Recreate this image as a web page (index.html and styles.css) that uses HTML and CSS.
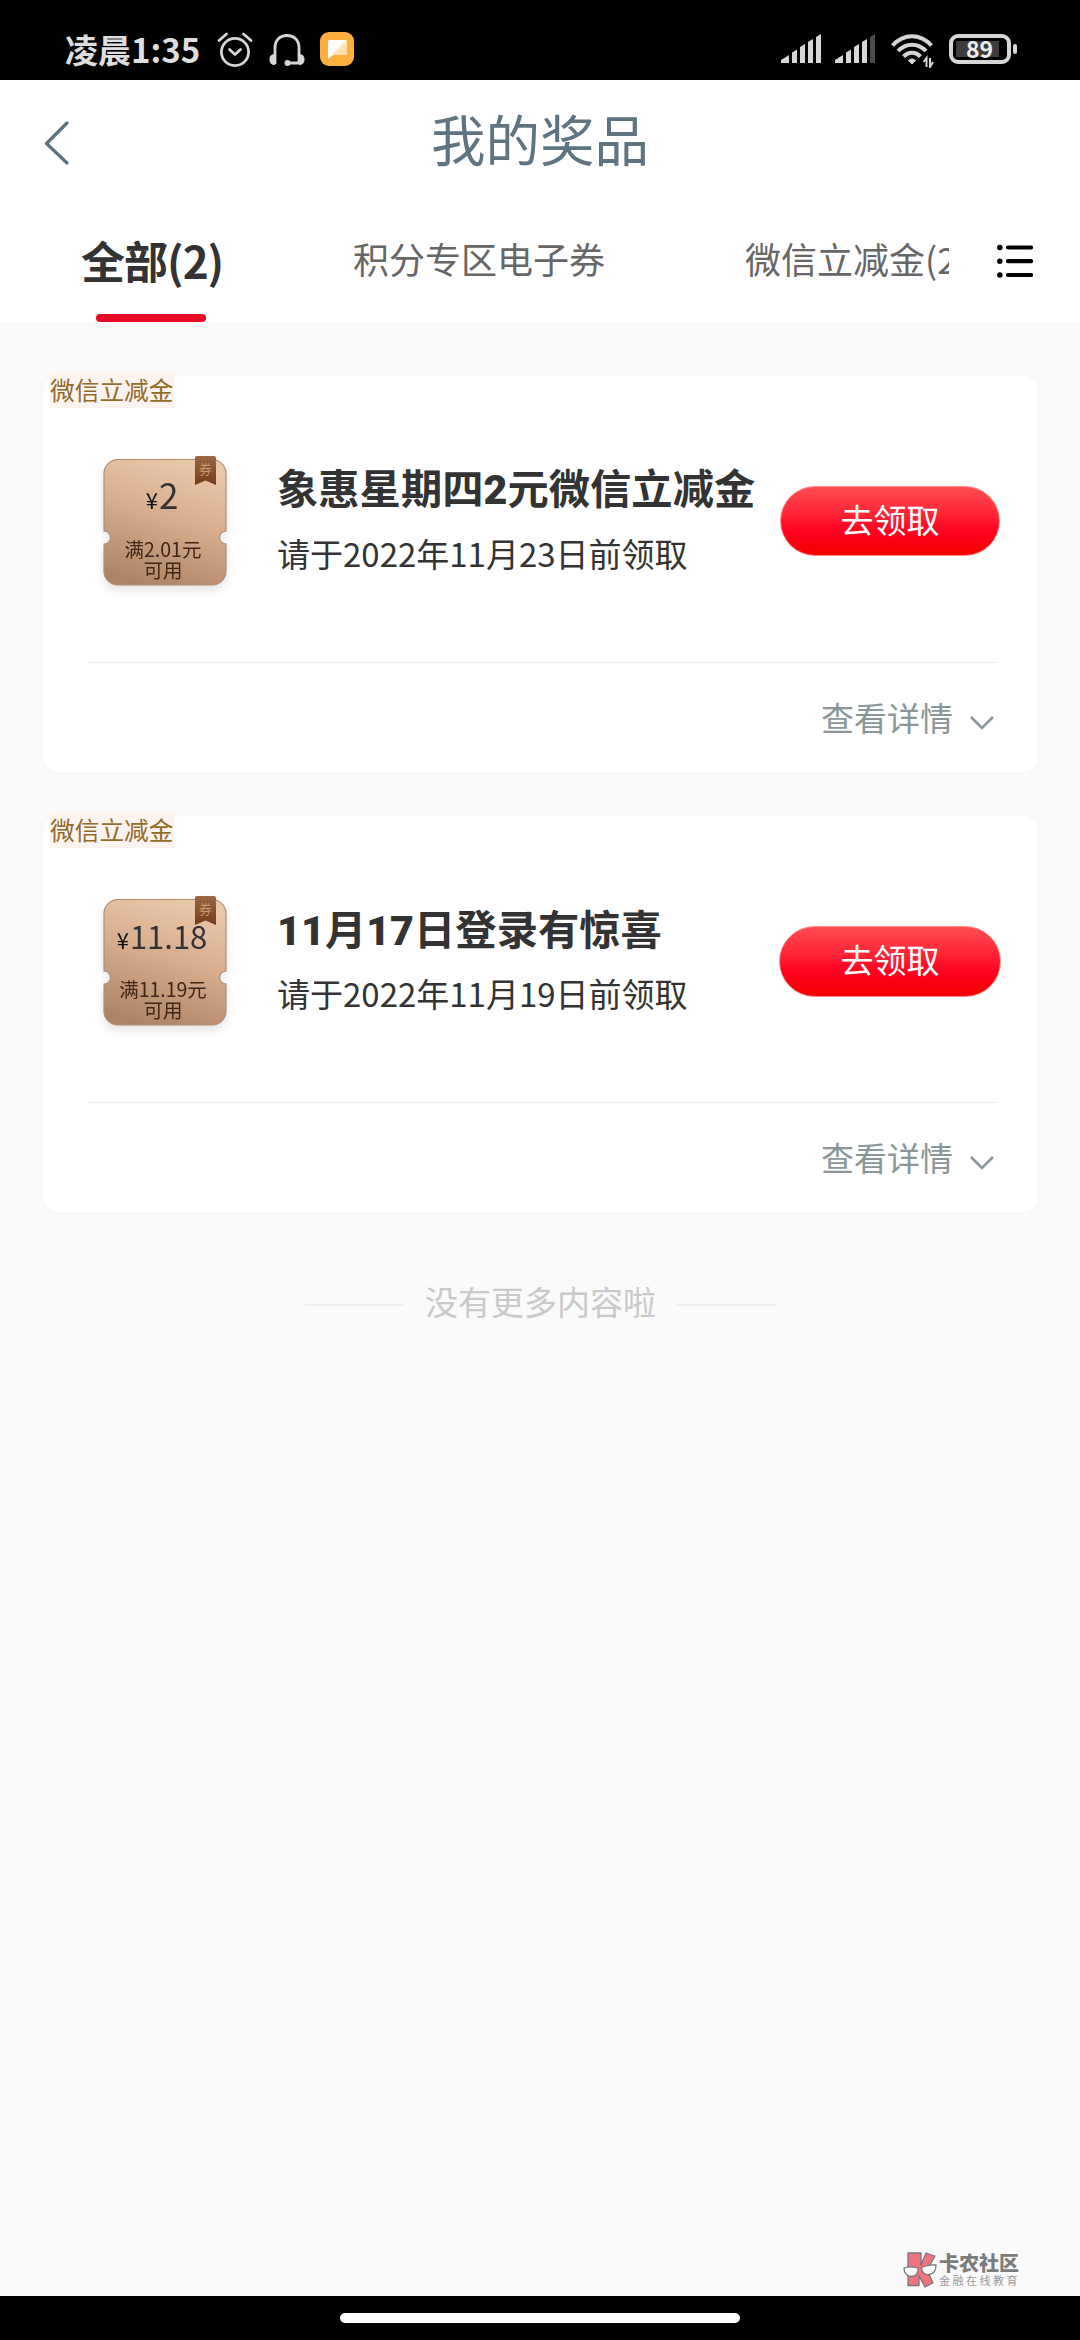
FILE: index.html
```html
<!DOCTYPE html>
<html lang="zh-CN">
<head>
<meta charset="utf-8">
<title>我的奖品</title>
<link rel="stylesheet" href="styles.css">
</head>
<body>
<div class="screen">
  <div class="status">
    <span class="clock">凌晨1:35</span>
    <svg class="st-alarm" width="36" height="36" viewBox="0 0 36 36" fill="none" stroke="#d6d6d6" stroke-width="2.8" stroke-linecap="round" stroke-linejoin="round"><circle cx="18" cy="20" r="13.6"/><path d="M12.5 17.5l5.5 5 5.500-5M2 8.500l7.500-6.500M34 8.500L26.500 2"/></svg>
    <svg class="st-head" width="36" height="36" viewBox="0 0 36 36" fill="none" stroke="#d6d6d6" stroke-width="2.800"><path d="M6 32V15.500C6 8 11 3.500 18 3.500S30 8 30 15.500V32M19 31h11"/><path d="M6 22v11c-3 0-5.500-1.500-5.500-5.500S3 22 6 22zM30 22c3 0 5.500 1.500 5.500 5.500S33 33 30 33z" fill="#d6d6d6" stroke="none"/><circle cx="18.500" cy="31" r="3" fill="#d6d6d6" stroke="none"/></svg>
    <svg class="st-app" width="34" height="34" viewBox="0 0 34 34"><defs><linearGradient id="bub" x1="0" y1="0" x2="1" y2="1"><stop offset=".45" stop-color="#fff"/><stop offset=".5" stop-color="#ffe9bd"/><stop offset="1" stop-color="#ffd694"/></linearGradient></defs><rect width="34" height="34" rx="9" fill="#fdb03f"/><path d="M9.500 8h16a1.500 1.500 0 0 1 1.500 1.500v12a1.500 1.500 0 0 1-1.500 1.500H13.500L8 27.500V9.500A1.500 1.500 0 0 1 9.500 8z" fill="url(#bub)"/></svg>
    <div class="st-right">
      <svg width="40" height="30" viewBox="0 0 40 30" fill="#d6d6d6"><path d="M0 29v-3l8-5v8zM11 29V18.500l5-3V29zM19 29V13l5-3v19zM27 29V8l5-3v24zM35 29V3l5-3v29z"/></svg>
      <svg width="40" height="30" viewBox="0 0 40 30" fill="#d6d6d6"><path d="M0 29v-3l8-5v8zM11 29V18.500l5-3V29zM19 29V13l5-3v19zM27 29V8l5-3v24z"/><path d="M35 29V3l5-3v29z" fill="#4a4a4a"/></svg>
      <svg class="st-wifi" width="43" height="34" viewBox="0 0 43 34" fill="none" stroke="#d6d6d6" stroke-width="4"><path d="M1.500 11.500C13-.7 29-.7 40.500 11.500M7 17c8-8.500 20-8.500 28 0M12.500 22.500c5-5 12-5 17 0"/><path d="M21 30l-3.500-3.500c2-2 5-2 7 0z" fill="#d6d6d6" stroke-width="1"/><path d="M35.500 33V24l-3 4M39 24v9l3-5" stroke-width="2"/></svg>
      <div class="battery"><span>89</span><i></i></div>
    </div>
  </div>

  <header class="header">
    <svg class="back" width="26" height="46" viewBox="0 0 26 46" fill="none" stroke="#5b7480" stroke-width="3.200" stroke-linecap="round" stroke-linejoin="round"><path d="M24 3L3.500 23.500 24 43"/></svg>
    <h1>我的奖品</h1>
  </header>

  <nav class="tabs">
    <div class="tab-scroll">
      <a class="tab active">全部(2)</a>
      <a class="tab">积分专区电子券</a>
      <a class="tab">微信立减金(2)</a>
    </div>
    <svg class="menu" width="36" height="36" viewBox="0 0 36 36" stroke="#000" stroke-width="4.200" stroke-linecap="round"><path d="M11 4.500h23M11 18.200h23M11 32h23"/><path d="M2.800 4.500h.1M2.800 18.200h.1M2.800 32h.1" stroke-width="5.400"/></svg>
  </nav>

  <main class="list">
    <article class="card">
      <span class="tag">微信立减金</span>
      <div class="row">
        <div class="coupon">
          <svg class="coupon-bg" width="124" height="130" viewBox="0 0 124 130"><defs><linearGradient id="cg" x1=".6" y1="0" x2=".3" y2="1"><stop offset="0" stop-color="#eac8ab"/><stop offset=".5" stop-color="#d3aa89"/><stop offset="1" stop-color="#ad8463"/></linearGradient><linearGradient id="rg" x1="0" y1="0" x2="0" y2="1"><stop offset="0" stop-color="#9c6843"/><stop offset="1" stop-color="#6f3d18"/></linearGradient></defs><path d="M15 3.500h94a14 14 0 0 1 14 14V75a6.500 6.500 0 0 0 0 13v27a14 14 0 0 1-14 14H15a14 14 0 0 1-14-14V88a6.500 6.500 0 0 0 0-13V17.500a14 14 0 0 1 14-14z" fill="url(#cg)" stroke="#b48d70" stroke-width="1.200"/><path d="M94 0h17a2 2 0 0 1 2 2v27l-10.500-4.500L92 29V2a2 2 0 0 1 2-2z" fill="url(#rg)"/></svg>
          <span class="ribbon">券</span>
          <p class="amount"><small>¥</small>2</p>
          <p class="cond">满2.01元<br>可用</p>
        </div>
        <div class="info">
          <h2>象惠星期四<b>2</b>元微信立减金</h2>
          <p>请于2022年11月23日前领取</p>
        </div>
        <button class="claim">去领取</button>
      </div>
      <div class="more">查看详情<svg width="26" height="16" viewBox="0 0 26 16" fill="none" stroke="#8a9799" stroke-width="2.600"><path d="M2 2l11 11L24 2"/></svg></div>
    </article>

    <article class="card">
      <span class="tag">微信立减金</span>
      <div class="row second">
        <div class="coupon">
          <svg class="coupon-bg" width="124" height="130" viewBox="0 0 124 130"><path d="M15 3.500h94a14 14 0 0 1 14 14V75a6.500 6.500 0 0 0 0 13v27a14 14 0 0 1-14 14H15a14 14 0 0 1-14-14V88a6.500 6.500 0 0 0 0-13V17.500a14 14 0 0 1 14-14z" fill="url(#cg)" stroke="#b48d70" stroke-width="1.200"/><path d="M94 0h17a2 2 0 0 1 2 2v27l-10.500-4.500L92 29V2a2 2 0 0 1 2-2z" fill="url(#rg)"/></svg>
          <span class="ribbon">券</span>
          <p class="amount long"><small>¥</small>11.18</p>
          <p class="cond">满11.19元<br>可用</p>
        </div>
        <div class="info">
          <h2><b>11</b>月<b>17</b>日登录有惊喜</h2>
          <p>请于2022年11月19日前领取</p>
        </div>
        <button class="claim">去领取</button>
      </div>
      <div class="more">查看详情<svg width="26" height="16" viewBox="0 0 26 16" fill="none" stroke="#8a9799" stroke-width="2.600"><path d="M2 2l11 11L24 2"/></svg></div>
    </article>

    <div class="end"><i></i><span>没有更多内容啦</span><i></i></div>
  </main>

  <div class="brand">
    <svg width="34" height="36" viewBox="0 0 34 36" stroke="#777" stroke-width="1.300" stroke-linejoin="round"><path d="M5 1h13v12l5-12 9 3-8 14 6 13-8 4-6-11v9.500H5z" fill="#f07480"/><path d="M1 16c4-1.500 9-1.500 14 0 .5 5-2 8.500-6.500 8.500S1 21 1 16z" fill="#fff"/><path d="M18.500 15.500c5-2.500 10-3 14.500-2.500 0 5.500-2.500 9-7 9.500s-7.500-2.500-7.500-7z" fill="#fff"/></svg>
    <div><strong>卡农社区</strong><em>金融在线教育</em></div>
  </div>
  <div class="homebar"><i></i></div>
</div>
</body>
</html>
```

FILE: styles.css
```css
* { box-sizing: border-box; margin: 0; padding: 0; }
body { background: #fafafa; }
.screen {
  width: 1080px; height: 2340px;
  display: flex; flex-direction: column;
  background: #fafafa; color: #333;
  font-family: "Noto Sans CJK SC", sans-serif;
  overflow: hidden;
}
svg { display: block; flex: none; }

.status {
  height: 80px; background: #000; color: #dedede;
  display: flex; align-items: flex-start; padding: 32px 69px 0 65px;
}
.clock { font-size: 33px; font-weight: 700; line-height: 34px; width: 152px; white-space: nowrap; }
.st-alarm { margin-right: 16px; }
.st-head { margin-right: 15px; }
.st-right { margin-left: auto; display: flex; gap: 14px; align-items: flex-start; padding-top: 2px; }
.st-wifi { margin: 0 1px 0 2px; }
.battery {
  width: 62px; height: 30px; border: 4px solid #d6d6d6; border-radius: 9px;
  position: relative; padding: 3px;
}
.battery span {
  display: block; width: 43px; height: 16px; background: #3c3c3c; color: #eee;
  font-size: 23px; line-height: 15px; font-weight: 700; padding-left: 10px;
}
.battery i { position: absolute; right: -10px; top: 6px; width: 4px; height: 10px; border-radius: 2px; background: #d6d6d6; }

.header { height: 124px; background: #fff; display: flex; align-items: center; justify-content: center; position: relative; }
.back { position: absolute; left: 43px; top: 40px; }
.header h1 { font-size: 54.500px; font-weight: 400; line-height: 80px; color: #5f7481; padding-bottom: 8px; }

.tabs { height: 118px; background: #fff; display: flex; padding-left: 81px; }
.tab-scroll { width: 868px; display: flex; overflow: hidden; white-space: nowrap; }
.tab { font-size: 36px; line-height: 52px; color: #666; flex: none; padding-top: 28px; margin-right: 140px; }
.tab.active {
  width: 140px; margin-right: 132px; font-size: 44px; line-height: 56px; font-weight: 700; color: #333;
  letter-spacing: -1px;
  display: flex; flex-direction: column; justify-content: space-between;
}
.tab.active::after { content: ""; width: 110px; height: 8px; border-radius: 4px; background: #e60a22; margin-left: 15px; }
.menu { margin: 39px 0 0 48px; }

.list { flex: 1; padding: 54px 42px 0 43px; display: flex; flex-direction: column; gap: 44px; }
.card {
  height: 396px; background: #fff; border-radius: 16px; flex: none;
  box-shadow: 0 0 20px rgba(0, 0, 0, .025);
  display: flex; flex-direction: column; align-items: flex-start;
}
.tag {
  background: #faf3ee; color: #926b2b; font-size: 24.700px; line-height: 33px; height: 35px;
  margin: -3px 0 0 7px; padding-right: 1px;
}
.row { height: 254px; width: 100%; display: flex; align-items: flex-start; padding: 48px 38px 0 60px; }
.coupon { width: 124px; height: 130px; position: relative; text-align: center; flex: none; filter: drop-shadow(0 5px 5px rgba(0, 0, 0, .1)); }
.coupon-bg { position: absolute; left: 0; top: 0; }
.ribbon { position: absolute; left: 92px; top: 4px; width: 21px; font-size: 13px; line-height: 18px; color: #c79a7c; }
.amount { position: relative; font-size: 35px; line-height: 40px; padding-top: 18px; height: 83px; padding-right: 6px; }
.amount small { font-size: 22px; color: #111; margin-right: 1px; }
.amount.long { font-size: 31px; padding-top: 20px; }
.cond { position: relative; font-size: 19.500px; line-height: 20.500px; color: #402615; padding-right: 4px; }
.info { flex: 1; padding-left: 50px; white-space: nowrap; min-width: 0; }
.info h2 { font-size: 41.300px; line-height: 60px; font-weight: 700; }
.info h2 b { font-family: Roboto, sans-serif; }
.second .info h2 { position: relative; top: 1px; }
.info p { font-size: 33px; line-height: 48px; margin-top: 9px; }
.claim {
  width: 220px; height: 70px; margin-top: 30px; border: 1px solid #ff8a8a; border-radius: 36px; flex: none;
  background: linear-gradient(#ff4c52, #ff2436 40%, #ff0020 65%, #f60000);
  color: #fff; font: 33px/64px "Noto Sans CJK SC", sans-serif; padding-bottom: 4px;
}
.second .claim { width: 222px; height: 71px; margin-right: -1px; padding-bottom: 5px; }
.more {
  width: 909px; margin-left: 44px; border-top: 1px solid #ececec; height: 110px;
  display: flex; justify-content: flex-end; padding: 30px 1px 0 0;
  font-size: 33px; line-height: 48px; color: #8a9799;
}
.more svg { margin: 22px 0 0 16px; }
.end { display: flex; justify-content: center; align-items: center; font-size: 33px; line-height: 48px; color: #c9c9c9; margin-top: 21px; }
.end i { width: 99px; height: 2px; background: #eee; margin-top: 8px; }
.end span { margin: 0 21px; }

.brand { display: flex; gap: 2px; justify-content: flex-end; height: 44px; padding-right: 60px; }
.brand div { display: flex; flex-direction: column; }
.brand strong { font-size: 20px; line-height: 22px; color: #7c7c7c; font-weight: 900; }
.brand em { font-style: normal; font-size: 11px; line-height: 12px; letter-spacing: 2.500px; color: #999; }
.homebar { height: 44px; background: #000; display: flex; justify-content: center; padding-top: 17px; }
.homebar i { width: 400px; height: 10px; border-radius: 5px; background: #fff; }
```
